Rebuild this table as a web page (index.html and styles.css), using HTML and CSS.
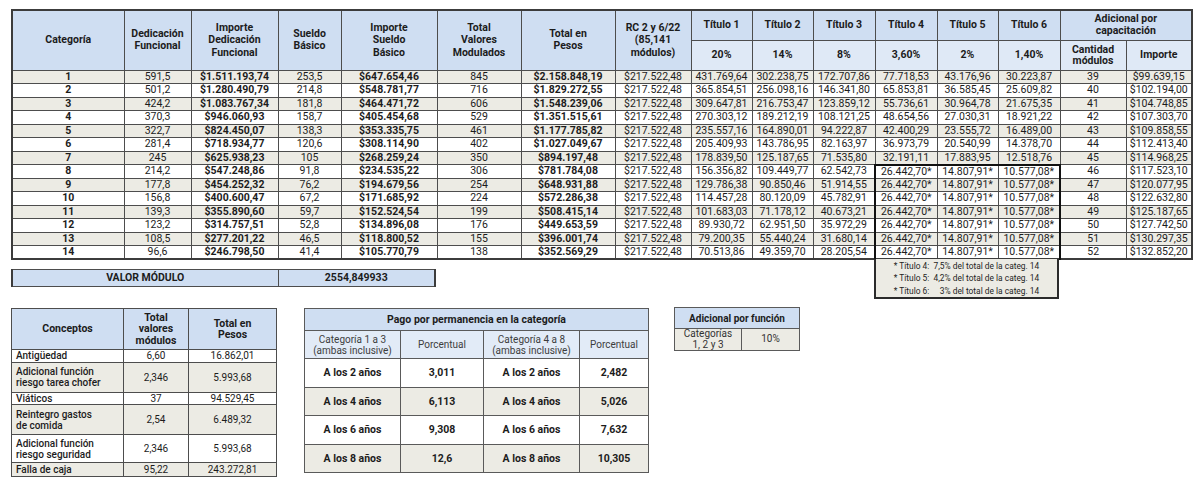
FILE: index.html
```html
<!DOCTYPE html>
<html lang="es">
<head>
<meta charset="utf-8">
<title>Escala salarial</title>
<link rel="stylesheet" href="styles.css">
</head>
<body>
<div class="page">
  <table class="main">
    <colgroup>
      <col style="width:112px"><col style="width:67px"><col style="width:87px"><col style="width:63px">
      <col style="width:96px"><col style="width:84px"><col style="width:94px"><col style="width:76px">
      <col style="width:61px"><col style="width:61px"><col style="width:62px"><col style="width:62px">
      <col style="width:61px"><col style="width:62px"><col style="width:66px"><col style="width:66px">
    </colgroup>
    <thead>
      <tr>
        <th rowspan="2">Categoría</th>
        <th rowspan="2">Dedicación<br>Funcional</th>
        <th rowspan="2">Importe<br>Dedicación<br>Funcional</th>
        <th rowspan="2">Sueldo<br>Básico</th>
        <th rowspan="2">Importe<br>Sueldo<br>Básico</th>
        <th rowspan="2">Total<br>Valores<br>Modulados</th>
        <th rowspan="2">Total en<br>Pesos</th>
        <th rowspan="2">RC 2 y 6/22<br>(85,141<br>módulos)</th>
        <th>Título 1</th>
        <th>Título 2</th>
        <th>Título 3</th>
        <th>Título 4</th>
        <th>Título 5</th>
        <th>Título 6</th>
        <th colspan="2">Adicional por<br>capacitación</th>
      </tr>
      <tr class="sub">
        <th>20%</th><th>14%</th><th>8%</th><th>3,60%</th><th>2%</th><th>1,40%</th>
        <th>Cantidad<br>módulos</th><th>Importe</th>
      </tr>
    </thead>
    <tbody>
      <tr><td class="b">1</td><td>591,5</td><td class="b">$1.511.193,74</td><td>253,5</td><td class="b">$647.654,46</td><td>845</td><td class="b">$2.158.848,19</td><td>$217.522,48</td><td>431.769,64</td><td>302.238,75</td><td>172.707,86</td><td>77.718,53</td><td>43.176,96</td><td>30.223,87</td><td>39</td><td>$99.639,15</td></tr>
      <tr><td class="b">2</td><td>501,2</td><td class="b">$1.280.490,79</td><td>214,8</td><td class="b">$548.781,77</td><td>716</td><td class="b">$1.829.272,55</td><td>$217.522,48</td><td>365.854,51</td><td>256.098,16</td><td>146.341,80</td><td>65.853,81</td><td>36.585,45</td><td>25.609,82</td><td>40</td><td>$102.194,00</td></tr>
      <tr><td class="b">3</td><td>424,2</td><td class="b">$1.083.767,34</td><td>181,8</td><td class="b">$464.471,72</td><td>606</td><td class="b">$1.548.239,06</td><td>$217.522,48</td><td>309.647,81</td><td>216.753,47</td><td>123.859,12</td><td>55.736,61</td><td>30.964,78</td><td>21.675,35</td><td>41</td><td>$104.748,85</td></tr>
      <tr><td class="b">4</td><td>370,3</td><td class="b">$946.060,93</td><td>158,7</td><td class="b">$405.454,68</td><td>529</td><td class="b">$1.351.515,61</td><td>$217.522,48</td><td>270.303,12</td><td>189.212,19</td><td>108.121,25</td><td>48.654,56</td><td>27.030,31</td><td>18.921,22</td><td>42</td><td>$107.303,70</td></tr>
      <tr><td class="b">5</td><td>322,7</td><td class="b">$824.450,07</td><td>138,3</td><td class="b">$353.335,75</td><td>461</td><td class="b">$1.177.785,82</td><td>$217.522,48</td><td>235.557,16</td><td>164.890,01</td><td>94.222,87</td><td>42.400,29</td><td>23.555,72</td><td>16.489,00</td><td>43</td><td>$109.858,55</td></tr>
      <tr><td class="b">6</td><td>281,4</td><td class="b">$718.934,77</td><td>120,6</td><td class="b">$308.114,90</td><td>402</td><td class="b">$1.027.049,67</td><td>$217.522,48</td><td>205.409,93</td><td>143.786,95</td><td>82.163,97</td><td>36.973,79</td><td>20.540,99</td><td>14.378,70</td><td>44</td><td>$112.413,40</td></tr>
      <tr><td class="b">7</td><td>245</td><td class="b">$625.938,23</td><td>105</td><td class="b">$268.259,24</td><td>350</td><td class="b">$894.197,48</td><td>$217.522,48</td><td>178.839,50</td><td>125.187,65</td><td>71.535,80</td><td>32.191,11</td><td>17.883,95</td><td>12.518,76</td><td>45</td><td>$114.968,25</td></tr>
      <tr><td class="b">8</td><td>214,2</td><td class="b">$547.248,86</td><td>91,8</td><td class="b">$234.535,22</td><td>306</td><td class="b">$781.784,08</td><td>$217.522,48</td><td>156.356,82</td><td>109.449,77</td><td>62.542,73</td><td class="bl bt">26.442,70*</td><td class="bt">14.807,91*</td><td class="br bt">10.577,08*</td><td>46</td><td>$117.523,10</td></tr>
      <tr><td class="b">9</td><td>177,8</td><td class="b">$454.252,32</td><td>76,2</td><td class="b">$194.679,56</td><td>254</td><td class="b">$648.931,88</td><td>$217.522,48</td><td>129.786,38</td><td>90.850,46</td><td>51.914,55</td><td class="bl">26.442,70*</td><td>14.807,91*</td><td class="br">10.577,08*</td><td>47</td><td>$120.077,95</td></tr>
      <tr><td class="b">10</td><td>156,8</td><td class="b">$400.600,47</td><td>67,2</td><td class="b">$171.685,92</td><td>224</td><td class="b">$572.286,38</td><td>$217.522,48</td><td>114.457,28</td><td>80.120,09</td><td>45.782,91</td><td class="bl">26.442,70*</td><td>14.807,91*</td><td class="br">10.577,08*</td><td>48</td><td>$122.632,80</td></tr>
      <tr><td class="b">11</td><td>139,3</td><td class="b">$355.890,60</td><td>59,7</td><td class="b">$152.524,54</td><td>199</td><td class="b">$508.415,14</td><td>$217.522,48</td><td>101.683,03</td><td>71.178,12</td><td>40.673,21</td><td class="bl">26.442,70*</td><td>14.807,91*</td><td class="br">10.577,08*</td><td>49</td><td>$125.187,65</td></tr>
      <tr><td class="b">12</td><td>123,2</td><td class="b">$314.757,51</td><td>52,8</td><td class="b">$134.896,08</td><td>176</td><td class="b">$449.653,59</td><td>$217.522,48</td><td>89.930,72</td><td>62.951,50</td><td>35.972,29</td><td class="bl">26.442,70*</td><td>14.807,91*</td><td class="br">10.577,08*</td><td>50</td><td>$127.742,50</td></tr>
      <tr><td class="b">13</td><td>108,5</td><td class="b">$277.201,22</td><td>46,5</td><td class="b">$118.800,52</td><td>155</td><td class="b">$396.001,74</td><td>$217.522,48</td><td>79.200,35</td><td>55.440,24</td><td>31.680,14</td><td class="bl">26.442,70*</td><td>14.807,91*</td><td class="br">10.577,08*</td><td>51</td><td>$130.297,35</td></tr>
      <tr><td class="b">14</td><td>96,6</td><td class="b">$246.798,50</td><td>41,4</td><td class="b">$105.770,79</td><td>138</td><td class="b">$352.569,29</td><td>$217.522,48</td><td>70.513,86</td><td>49.359,70</td><td>28.205,54</td><td class="bl">26.442,70*</td><td>14.807,91*</td><td class="br">10.577,08*</td><td>52</td><td>$132.852,20</td></tr>
    </tbody>
  </table>

  <div class="below">
    <table class="valor">
      <tr><th>VALOR MÓDULO</th><td>2554,849933</td></tr>
    </table>
    <div class="note">
      <div class="line">* Título 4:  7,5% del total de la categ. 14</div>
      <div class="line">* Título 5:  4,2% del total de la categ. 14</div>
      <div class="line">* Título 6:     3% del total de la categ. 14</div>
    </div>
  </div>

  <div class="bottom">
    <table class="conceptos">
      <colgroup><col style="width:112px"><col style="width:65px"><col style="width:88px"></colgroup>
      <thead>
        <tr><th>Conceptos</th><th>Total<br>valores<br>módulos</th><th>Total en<br>Pesos</th></tr>
      </thead>
      <tbody>
        <tr class="r1"><td class="lbl">Antigüedad</td><td>6,60</td><td>16.862,01</td></tr>
        <tr class="r2 alt"><td class="lbl">Adicional función<br>riesgo tarea chofer</td><td>2,346</td><td>5.993,68</td></tr>
        <tr class="r1"><td class="lbl">Viáticos</td><td>37</td><td>94.529,45</td></tr>
        <tr class="r3 alt"><td class="lbl">Reintegro gastos<br>de comida</td><td>2,54</td><td>6.489,32</td></tr>
        <tr class="r4"><td class="lbl">Adicional función<br>riesgo seguridad</td><td>2,346</td><td>5.993,68</td></tr>
        <tr class="r5 alt"><td class="lbl">Falla de caja</td><td>95,22</td><td>243.272,81</td></tr>
      </tbody>
    </table>

    <table class="perm">
      <colgroup><col style="width:96px"><col style="width:83px"><col style="width:96px"><col style="width:69px"></colgroup>
      <thead>
        <tr><th colspan="4" class="title">Pago por permanencia en la categoría</th></tr>
        <tr class="sub"><th>Categoría 1 a 3<br>(ambas inclusive)</th><th>Porcentual</th><th>Categoría 4 a 8<br>(ambas inclusive)</th><th>Porcentual</th></tr>
      </thead>
      <tbody>
        <tr><td>A los 2 años</td><td>3,011</td><td>A los 2 años</td><td>2,482</td></tr>
        <tr class="alt"><td>A los 4 años</td><td>6,113</td><td>A los 4 años</td><td>5,026</td></tr>
        <tr><td>A los 6 años</td><td>9,308</td><td>A los 6 años</td><td>7,632</td></tr>
        <tr class="alt"><td>A los 8 años</td><td>12,6</td><td>A los 8 años</td><td>10,305</td></tr>
      </tbody>
    </table>

    <table class="funcion">
      <colgroup><col style="width:67px"><col style="width:58px"></colgroup>
      <thead><tr><th colspan="2">Adicional por función</th></tr></thead>
      <tbody><tr><td>Categorías<br>1, 2 y 3</td><td>10%</td></tr></tbody>
    </table>
  </div>
</div>
</body>
</html>
```

FILE: styles.css
```css
* { box-sizing: border-box; }

body {
  margin: 0;
  background: #ffffff;
  font-family: Roboto, "Liberation Sans", Arial, sans-serif;
  color: #1c1c1c;
}

.page {
  padding: 9px 0 0 11px;
}

table {
  border-collapse: collapse;
  table-layout: fixed;
}

th, td {
  padding: 0;
  text-align: center;
}

/* ---------- main table ---------- */
.main {
  width: 1180px;
  border: 2px solid #3c3c3c;
  font-size: 10.5px;
}

.main th,
.main td {
  border: 1px solid #4d4d4d;
}

.main thead th {
  background: #cfdef2;
  font-weight: 700;
  line-height: 12.5px;
  height: 30px;
}

.main thead tr.sub th {
  background: #dfe9f6;
  line-height: 11.5px;
}

.main tbody td {
  height: 13.5px;
  line-height: 12px;
  white-space: nowrap;
}

.main tbody tr:nth-child(odd) td {
  background: #ecebe4;
}

.b { font-weight: 700; }

.main td.bl { border-left: 2px solid #111; }
.main td.br { border-right: 2px solid #111; }
.main td.bt { border-top: 2px solid #111; }

/* ---------- valor módulo + nota ---------- */
.below {
  display: flex;
  align-items: flex-start;
}

.valor {
  width: 425px;
  margin-top: 9px;
  font-size: 10.5px;
  border-left: 2px solid #3c3c3c;
  border-right: 2px solid #3c3c3c;
}

.valor th,
.valor td {
  background: #cfdef2;
  font-weight: 700;
  height: 17px;
  line-height: 12px;
  border-top: 1px solid #4d4d4d;
  border-bottom: 1px solid #4d4d4d;
}

.valor th {
  width: 266px;
  border-right: 1px solid #4d4d4d;
}

.note {
  margin-left: 438px;
  margin-top: -1px;
  width: 185px;
  height: 40px;
  background: #ecebe4;
  border: 2px solid #2b2b2b;
  border-top: none;
  font-size: 8.4px;
  line-height: 12.3px;
  padding-top: 1px;
  text-align: center;
  color: #1e1e1e;
}

.note .line {
  white-space: pre;
}

/* ---------- bottom tables ---------- */
.bottom {
  display: flex;
  align-items: flex-start;
  margin-top: 9px;
}

.conceptos {
  width: 265px;
  font-size: 10px;
  border: 1.5px solid #4d4d4d;
}

.conceptos th,
.conceptos td {
  border: 1px solid #4d4d4d;
  line-height: 11px;
}

.conceptos thead th {
  background: #cfdef2;
  font-weight: 700;
  height: 41px;
  font-size: 10.5px;
  line-height: 11.5px;
}

.conceptos td.lbl {
  text-align: left;
  padding-left: 4px;
  font-weight: 500;
}

.conceptos tr.alt td { background: #ecebe4; }
.conceptos tr.r1 td { height: 12.5px; }
.conceptos tr.r2 td { height: 30px; }
.conceptos tr.r3 td { height: 30px; }
.conceptos tr.r4 td { height: 28px; }
.conceptos tr.r5 td { height: 13.5px; }

.perm {
  width: 344px;
  margin-left: 27px;
  font-size: 10px;
  border: 1.5px solid #4d4d4d;
}

.perm th,
.perm td {
  border: 1px solid #5a5a5a;
}

.perm th.title {
  background: #cfdef2;
  font-weight: 700;
  height: 22px;
  font-size: 10.5px;
}

.perm tr.sub th {
  background: #e2ebf7;
  font-weight: 400;
  color: #3d3d3d;
  height: 28px;
  line-height: 11px;
  font-size: 10px;
}

.perm tbody td {
  height: 28.5px;
  font-weight: 700;
  font-size: 10.5px;
}

.perm tr.alt td { background: #ecebe4; }

.funcion {
  width: 125px;
  margin-left: 25px;
  margin-top: -1px;
  font-size: 10px;
  border: 1.5px solid #4d4d4d;
}

.funcion th,
.funcion td {
  border: 1px solid #5a5a5a;
}

.funcion th {
  background: #cfdef2;
  font-weight: 700;
  height: 21px;
}

.funcion td {
  background: #ecebe4;
  height: 22px;
  line-height: 10.5px;
  color: #333;
}
```
